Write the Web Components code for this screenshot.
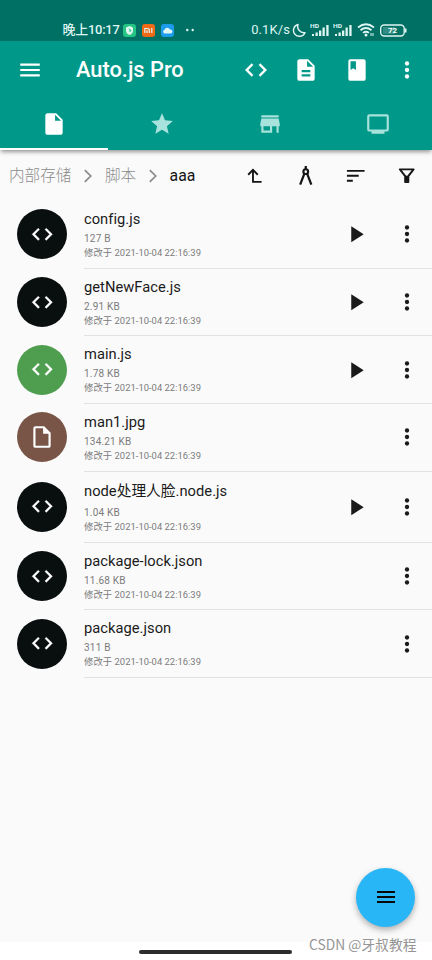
<!DOCTYPE html>
<html lang="zh-CN">
<head>
<meta charset="utf-8">
<title>Auto.js Pro</title>
<style>
html,body{margin:0;height:100%;overflow:hidden;background:#fafafa}
body{font-family:Roboto,"Noto Sans CJK SC",sans-serif}
</style>
</head>
<body>
<file-app></file-app>
<script>
const ICONS = {
  menu: '<path d="M3 18h18v-2H3v2zm0-5h18v-2H3v2zm0-7v2h18V6H3z"/>',
  code: '<path d="M9.4 16.6 4.8 12l4.6-4.6L8 6l-6 6 6 6 1.4-1.4zm5.2 0 4.6-4.6-4.6-4.6L16 6l6 6-6 6-1.4-1.4z" stroke="currentColor" stroke-width=".3"/>',
  doc: '<path d="M14 2H6c-1.1 0-2 .9-2 2v16c0 1.1.9 2 2 2h12c1.100 0 2-.9 2-2V8l-6-6zm2 16H8v-2h8v2zm0-4H8v-2h8v2zm-3-5V3.500L18.500 9H13z"/>',
  book: '<path fill-rule="evenodd" d="M6 2h12a2 2 0 0 1 2 2v16a2 2 0 0 1-2 2H6a2 2 0 0 1-2-2V4a2 2 0 0 1 2-2zm0 2v8l2.500-1.600L11 12V4z"/>',
  more: '<circle cx="12" cy="6" r="2"/><circle cx="12" cy="12" r="2"/><circle cx="12" cy="18" r="2"/>',
  file: '<path d="M14 2H6c-1.100 0-2 .9-2 2v16c0 1.100.9 2 2 2h12c1.100 0 2-.9 2-2V8l-6-6zm-1 7V3.500L18.500 9H13z"/>',
  star: '<path d="M12 17.270 18.180 21l-1.640-7.030L22 9.240l-7.190-.61L12 2 9.190 8.630 2 9.240l5.460 4.730L5.820 21z"/>',
  store: '<path d="M20 4H4v2h16V4zm1 10v-2l-1-5H4l-1 5v2h1v6h10v-6h4v6h2v-6h1zm-9 4H6v-4h6v4z"/>',
  screen: '<path fill-rule="evenodd" d="M4 3h16a2 2 0 0 1 2 2v12a2 2 0 0 1-2 2h-2v2H6v-2H4a2 2 0 0 1-2-2V5a2 2 0 0 1 2-2zm0 2v12h16V5z"/>',
  chevron: '<path fill="none" stroke="currentColor" stroke-width="1.900" d="m8.500 5.500 6.500 6.500-6.500 6.500"/>',
  up: '<path fill="none" stroke="currentColor" stroke-width="1.900" d="M5.300 11 10.200 6l4.900 5M10.200 6v12.200H19"/>',
  compass: '<path fill="none" stroke="currentColor" stroke-width="2.300" d="M12 2v4M10.500 10 6.300 21M13.500 10l4.200 11"/><circle cx="12" cy="7.800" r="2.400" fill="none" stroke="currentColor" stroke-width="2.200"/>',
  sort: '<path d="M3 18h6v-2H3v2zM3 6v2h18V6H3zm0 7h12v-2H3v2z"/>',
  filter: '<path fill="none" stroke="currentColor" stroke-width="2" stroke-linejoin="round" d="M5 5.500h14l-5.400 6.800v6.200h-3.200v-6.200z"/><path d="M10.500 12h3v6h-3z"/>',
  play: '<path d="M6.700 4.800v14.800L18.200 12.200z"/>',
  page: '<path d="M14 2H6a2 2 0 0 0-2 2v16a2 2 0 0 0 2 2h12a2 2 0 0 0 2-2V8l-6-6zM6 20V4h7v5h5v11H6z"/>'
};
class UiIcon extends HTMLElement{
  connectedCallback(){
    this.attachShadow({mode:'open'}).innerHTML=`<style>:host{display:block;width:26px;height:26px;flex:none}svg{display:block;width:100%;height:100%;fill:currentColor}</style><svg viewBox="0 0 24 24">${ICONS[this.getAttribute('name')]}</svg>`;
  }
}
customElements.define('ui-icon',UiIcon);

customElements.define('status-bar',class extends HTMLElement{
  connectedCallback(){
    const signal='<svg width="20" height="16" viewBox="0 0 20 16"><text x="0" y="5.500" font-size="6" font-weight="700" textLength="9" lengthAdjust="spacingAndGlyphs">HD</text><path d="M2 12h2v2H2zM5.500 10.500h2.300V14H5.500zM9 8.500h2.300V14H9zM12.500 5.500h2.300V14h-2.300zM16.300 3h2.300v11h-2.300z"/></svg>';
    this.attachShadow({mode:'open'}).innerHTML=`<style>
:host{display:flex;height:41px;box-sizing:border-box;padding:19px 25px 0 62.500px;background:#007065;color:#dff5f2;align-items:center;font-size:12.900px;line-height:20px;justify-content:space-between}
div{display:flex;align-items:center}svg{display:block;fill:currentColor;flex:none}
.l span{letter-spacing:-.2px;white-space:nowrap;width:60px;font-weight:500}
.l svg+svg{margin-left:6.300px}.l svg.dots{margin-left:11px}.r span{letter-spacing:.15px;margin-right:2px}
</style>
<div class="l"><span>晚上10:17</span>
<svg width="13" height="13" viewBox="0 0 13 13"><rect width="13" height="13" rx="3" fill="#24c583"/><path d="M6.500 2 10 3.500v3q0 3-3.500 4.500Q3 9.500 3 6.500v-3z"/><path d="m5.500 4 3 2.500-2 2V6.500z" fill="#24c583"/></svg>
<svg width="13" height="13" viewBox="0 0 13 13"><rect width="13" height="13" rx="3" fill="#f06a16"/><path fill="none" stroke="currentColor" stroke-width="1.200" d="M2.800 9V4.500h2.500q2 0 2 1.800V9M5 9V6.200M9.800 4V9"/></svg>
<svg width="13" height="13" viewBox="0 0 13 13"><rect width="13" height="13" rx="3" fill="#1b9cec"/><path d="M3.500 9.500a2 2 0 0 1 0-3.800 3 3 0 0 1 5.500-.2 2 2 0 0 1 .7 4z"/></svg>
<svg class="dots" width="12" height="4"><circle cx="2.300" cy="2" r="1.200"/><circle cx="7.700" cy="2" r="1.200"/></svg></div>
<div class="r"><span>0.1K/s</span>
<svg width="15" height="16" viewBox="0 0 15 16"><path fill="none" stroke="currentColor" stroke-width="1.400" stroke-linejoin="round" d="M6 2.500a6 6 0 1 0 7 8.200A6.300 6.300 0 0 1 6 2.500z"/></svg><svg width="3"></svg>${signal}<svg width="3"></svg>${signal}<svg width="4"></svg>
<svg width="18" height="14" viewBox="0 0 18 14"><g fill="none" stroke="currentColor" stroke-width="1.800"><path d="M1 4.500q8-6.500 16 0M3.500 7.300q5.500-4.500 11 0M6 9.900q3-2.300 6 0"/></g><circle cx="9" cy="12" r="1.500"/><path d="M14 10v3m2-3v3" stroke="currentColor"/></svg><svg width="5"></svg>
<svg width="27" height="13" viewBox="0 0 27 13"><rect x=".7" y="1" width="23.500" height="11" rx="3.500" fill="none" stroke="currentColor" stroke-width="1.400"/><path d="M3 3h12v7H3z" opacity=".22"/><path d="M25 4.500h1.500v4H25z"/><text x="12.500" y="9.300" text-anchor="middle" font-size="8" font-weight="700" fill="#fff">72</text></svg></div>`;
  }
});

customElements.define('app-header',class extends HTMLElement{
  connectedCallback(){
    this.attachShadow({mode:'open'}).innerHTML=`<style>
:host{display:block;background:#009888;color:#fff;height:109px;box-shadow:0 3px 4px -1px rgba(0,0,0,.4);position:relative}
.bar{display:flex;height:58.500px;align-items:center;padding:0 12px 0 16.500px}
h1{font-size:21.800px;font-weight:500;margin:0 auto 0 33.500px;line-height:28px;white-space:nowrap}
.acts{display:flex;gap:24.500px}
.tabs{display:grid;grid-template-columns:repeat(4,1fr);height:50.500px}
.tabs div{display:flex;justify-content:center;box-sizing:border-box;padding-top:11.500px;color:#a8e2dc}
.tabs .on{color:#fff;border-bottom:2.200px solid #fff}
</style><div class="bar"><ui-icon name="menu"></ui-icon><h1>Auto.js Pro</h1><div class="acts"><ui-icon name="code"></ui-icon><ui-icon name="doc"></ui-icon><ui-icon name="book"></ui-icon><ui-icon name="more"></ui-icon></div></div>
<div class="tabs"><div class="on"><ui-icon name="file"></ui-icon></div><div><ui-icon name="star"></ui-icon></div><div><ui-icon name="store"></ui-icon></div><div><ui-icon name="screen"></ui-icon></div></div>`;
  }
});

customElements.define('path-bar',class extends HTMLElement{
  connectedCallback(){
    this.attachShadow({mode:'open'}).innerHTML=`<style>
:host{display:flex;height:51px;align-items:center;justify-content:space-between;padding:0 14px 0 9px;color:#8c8c8c;font-size:15.600px;box-sizing:border-box}
div{display:flex;align-items:center;white-space:nowrap}
.p{line-height:22px;font-weight:300}.p b{font-weight:400;color:#151515;font-size:15.800px}
.p ui-icon{width:22px;height:22px;margin:0 6px 0 5.500px}
.a{color:#151515;gap:27px}.a ui-icon{width:23.500px;height:23.500px}
</style><div class="p"><span>内部存储</span><ui-icon name="chevron"></ui-icon><span>脚本</span><ui-icon name="chevron"></ui-icon><b>aaa</b></div>
<div class="a"><ui-icon name="up"></ui-icon><ui-icon name="compass"></ui-icon><ui-icon name="sort"></ui-icon><ui-icon name="filter"></ui-icon></div>`;
  }
});

customElements.define('file-row',class extends HTMLElement{
  connectedCallback(){
    const a=n=>this.getAttribute(n);
    this.attachShadow({mode:'open'}).innerHTML=`<style>
:host{display:flex;height:${a('height')||67.7}px;align-items:stretch;padding-left:17px}
.c{width:50px;height:50px;margin-bottom:1.400px;border-radius:50%;background:${a('color')||'#090e0f'};color:#fff;display:flex;align-items:center;justify-content:center;align-self:center;flex:none}
.c ui-icon{width:${a('icon')?26:24.5}px;height:${a('icon')?26:24.5}px}
.m{margin-left:17px;flex:1;border-bottom:1px solid #e2e2e2;display:flex;align-items:center;padding-right:12px;color:#1a1a1a}
.t{flex:1;white-space:nowrap;color:#7b7b7b}
.n{font-size:14.700px;line-height:${a('height')?22:20}px;color:#1a1a1a;letter-spacing:.03px}
.s{font-size:10px;line-height:14px;padding-top:${a('height')?4:3}px;letter-spacing:.2px}.d{font-size:9.400px;line-height:14px;letter-spacing:.03px}
.g{margin-right:24px}
</style><div class="c"><ui-icon name="${a('icon')||'code'}"></ui-icon></div>
<div class="m"><div class="t"><div class="n"><slot></slot></div><div class="s">${a('size')}</div><div class="d">修改于 2021-10-04 22:16:39</div></div>
${this.hasAttribute('run')?'<ui-icon class="g" name="play"></ui-icon>':''}<ui-icon name="more"></ui-icon></div>`;
  }
});

customElements.define('action-button',class extends HTMLElement{
  connectedCallback(){
    this.attachShadow({mode:'open'}).innerHTML=`<style>:host{display:flex;position:absolute;right:17px;bottom:33.500px;width:59px;height:59px;border-radius:50%;background:#29b6f6;color:#080808;align-items:center;justify-content:center;box-shadow:0 3px 6px rgba(0,0,0,.3)}ui-icon{width:24px;height:24px}</style><ui-icon name="menu"></ui-icon>`;
  }
});

customElements.define('file-app',class extends HTMLElement{
  connectedCallback(){
    this.attachShadow({mode:'open'}).innerHTML=`<style>
:host{display:flex;flex-direction:column;height:960px;width:432px;position:relative;overflow:hidden;background:#fafafa}
main{flex:1}footer{height:18px;background:#fff;display:flex;justify-content:center;box-sizing:border-box;padding-top:8px}
footer i{width:153px;height:4px;border-radius:2px;background:#2d2d2d;margin-right:2px}
.w{position:absolute;right:15.500px;bottom:7.500px;font-size:13.800px;line-height:18px;color:#959595;font-weight:400;white-space:nowrap;text-shadow:1px 1px 0 #fff;font-family:"Noto Sans CJK SC",sans-serif}
</style><status-bar></status-bar><app-header></app-header><path-bar></path-bar><main>
<file-row size="127 B" run>config.js</file-row>
<file-row size="2.91 KB" run>getNewFace.js</file-row>
<file-row size="1.78 KB" color="#4f9d4f" run>main.js</file-row>
<file-row size="134.21 KB" color="#795548" icon="page">man1.jpg</file-row>
<file-row size="1.04 KB" height="71" run>node处理人脸.node.js</file-row>
<file-row size="11.68 KB">package-lock.json</file-row>
<file-row size="311 B">package.json</file-row>
</main><footer><i></i></footer><action-button></action-button><div class="w">CSDN @牙叔教程</div>`;
  }
});
</script>
</body>
</html>
